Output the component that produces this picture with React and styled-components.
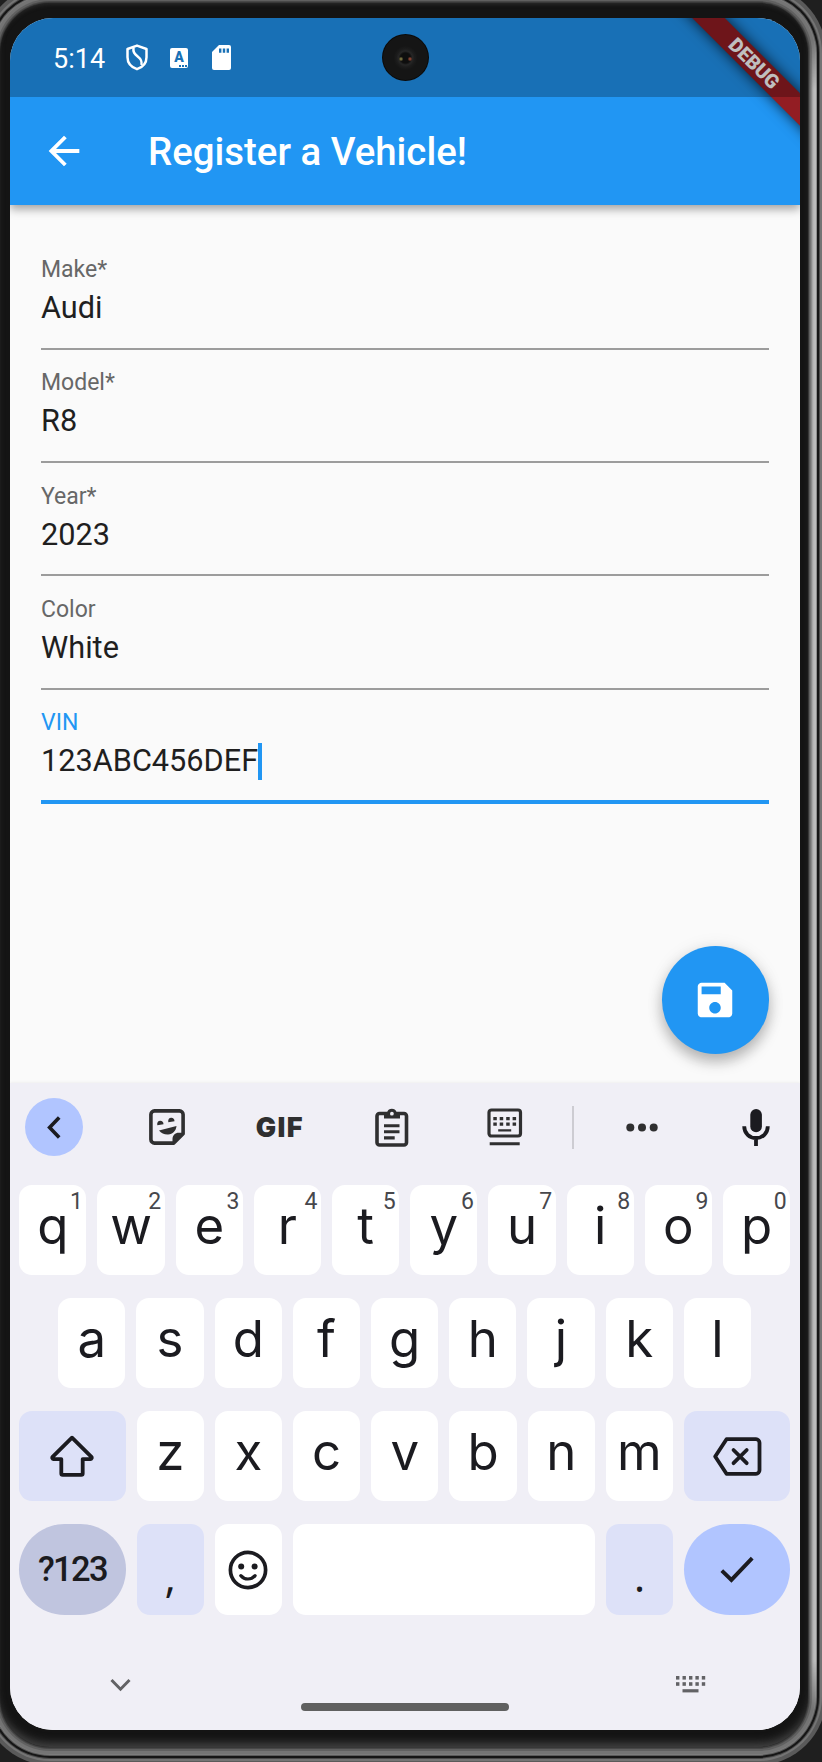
import React from "react";
import styled, { createGlobalStyle, css } from "styled-components";

const GlobalStyle = createGlobalStyle`
  *, *::before, *::after { box-sizing: border-box; }
  body { margin: 0; background: #1f1f1f; font-family: Roboto, sans-serif; }
`;

/* ---------- device ---------- */

const Page = styled.div`
  position: relative;
  width: 822px;
  height: 1762px;
  overflow: hidden;
  background: #1f1f1f;
  display: flex;
  align-items: flex-start;
`;

const Bezel = styled.div`
  flex: none;
  width: 808px;
  height: 1744px;
  margin-top: 3px;
  padding: 15px 8px 17px 10px;
  border-radius: 50px;
  background: #141414;
  box-shadow:
    inset 0 -8px 8px -4px #444,
    inset 0 4px 4px -3px #2e2e2e,
    0 0 0 1px #383838,
    0 0 0 2px #484848,
    0 0 0 4px #606060,
    0 0 0 7px #747474,
    0 0 0 8px #7c7c7c,
    0 0 0 9px #5a5a5a,
    0 0 0 11px #151515,
    0 0 0 12px #4a4a4a,
    0 0 0 14px #747474,
    0 0 0 18px #5a5a5a;
`;

const RimHighlight = styled.div`
  position: absolute;
  left: 809px;
  top: 40px;
  width: 8px;
  height: 1670px;
  background: linear-gradient(90deg, #555, #7c7c7c 25%, #b2b2b2 50%, #c0c0c0 80%, #777);
  mask-image: linear-gradient(transparent, #000 50px, #000 1620px, transparent);
`;

const Screen = styled.div`
  position: relative;
  width: 790px;
  height: 1712px;
  border-radius: 43px;
  overflow: hidden;
  background: #fafafa;
  display: flex;
  flex-direction: column;
`;

/* ---------- header ---------- */

const Header = styled.header`
  position: relative;
  z-index: 1;
  flex: none;
  height: 187px;
  background: #2196f3;
  box-shadow: 0 4px 9px rgba(0, 0, 0, 0.36);
`;

const StatusBar = styled.div`
  position: relative;
  z-index: 2;
  height: 79px;
  padding-left: 43px;
  display: flex;
  align-items: center;
  background: rgba(0, 0, 0, 0.25);
  color: #fff;
`;

const Clock = styled.span`
  width: 73px;
  font-size: 27px;
  line-height: 32px;
  padding-top: 2px;
`;

const StatusIcon = styled.span`
  display: flex;
  width: ${(p) => p.$w}px;
  margin-right: ${(p) => p.$gap}px;
`;

const LetterBadge = styled.span`
  width: 18px;
  height: 20px;
  margin-right: 24px;
  border-radius: 2px;
  background: #fff;
  color: #1971b6;
  font: 900 14px/18px Roboto, sans-serif;
  text-align: center;
  background-image: linear-gradient(#1971b6, #1971b6), linear-gradient(#1971b6, #1971b6), linear-gradient(#1971b6, #1971b6);
  background-size: 2px 2px;
  background-position: 9px 17px, 12px 17px, 15px 17px;
  background-repeat: no-repeat;
`;

const Camera = styled.div`
  position: absolute;
  left: 371.5px;
  top: 16px;
  width: 47px;
  height: 47px;
  border-radius: 50%;
  background:
    radial-gradient(circle at 19px 25px, #8f8a50 0, #5a5530 1.2px, transparent 2.4px),
    radial-gradient(circle at 28px 25px, #a0503c 0, #6a3528 1.2px, transparent 2.4px),
    radial-gradient(circle at 23.5px 24px, #0e0e0e 0 5px, #262626 7px, #1c1c1c 9px, #151515 12px);
  box-shadow: inset 0 0 0 1px #0a0a0a;
`;

const AppBar = styled.div`
  height: 108px;
  padding: 0 31px;
  display: flex;
  align-items: center;
  color: #fff;
`;

const BackButton = styled.span`
  display: flex;
  width: 46px;
  margin-right: 61px;
`;

const Title = styled.h1`
  margin: 0;
  font-size: 38.4px;
  line-height: 45px;
  font-weight: 500;
  white-space: nowrap;
`;

const DebugBanner = styled.div`
  position: absolute;
  z-index: 1;
  left: 634px;
  top: 33.5px;
  width: 220px;
  height: 23px;
  transform: rotate(45deg);
  background: #931d23;
  box-shadow: 0 0 14px rgba(0, 0, 0, 0.75);
  color: #fff;
  font-size: 19.6px;
  font-weight: 900;
  line-height: 23px;
  text-align: center;
`;

/* ---------- form ---------- */

const Body = styled.main`
  flex: none;
  height: 877.6px;
  padding: 31.6px 31px 28.8px;
  display: flex;
  flex-direction: column;
`;

const Field = styled.div`
  height: 113.3px;
  padding-top: 19.6px;
  border-bottom: 2px solid #9c9c9c;
  ${(p) =>
    p.$focused &&
    css`
      height: 113.9px;
      padding-top: 19px;
      border-bottom: 4px solid #2196f3;
    `}
`;

const Label = styled.div`
  font-size: 23px;
  line-height: 27px;
  color: ${(p) => (p.$focused ? "#2196f3" : "#676767")};
`;

const Value = styled.div`
  display: flex;
  align-items: center;
  margin-top: 7px;
  font-size: 30.7px;
  line-height: 36px;
  color: #1f1f1f;
`;

const Caret = styled.span`
  width: 4px;
  height: 37px;
  background: #2196f3;
`;

const Fab = styled.button`
  align-self: flex-end;
  margin-top: auto;
  width: 107.5px;
  height: 107.5px;
  padding: 0;
  border: 0;
  border-radius: 50%;
  background: #2196f3;
  color: #fff;
  display: flex;
  align-items: center;
  justify-content: center;
  box-shadow: 0 8px 14px rgba(0, 0, 0, 0.26), 0 1px 18px rgba(0, 0, 0, 0.08);
`;

/* ---------- keyboard ---------- */

const Keyboard = styled.section`
  flex: 1;
  background: #f0eff6;
  box-shadow: 0 0 3px rgba(0, 0, 0, 0.08);
  position: relative;
  color: #1b1b20;
  display: flex;
  flex-direction: column;
`;

const Toolbar = styled.div`
  flex: none;
  height: 89.4px;
  display: flex;
  align-items: center;
  color: #2f2f30;
`;

const Collapse = styled.span`
  flex: none;
  width: 58px;
  height: 58px;
  margin: 0 28px 0 15px;
  border-radius: 50%;
  background: #b1c5ff;
  color: #1b1b20;
  display: flex;
  align-items: center;
  justify-content: center;
`;

const Tool = styled.span`
  flex: none;
  width: 112.5px;
  display: flex;
  justify-content: center;
`;

const Gif = styled.span`
  font: 900 27px/30px Inter, sans-serif;
  letter-spacing: 1.4px;
  padding-top: 1px;
`;

const Divider = styled.span`
  flex: none;
  width: 2px;
  height: 43px;
  margin: 0 12px 0 11px;
  background: #cdccd2;
`;

const MicTool = styled(Tool)`
  width: 114px;
  color: #1b1b20;
`;

const Rows = styled.div`
  flex: none;
  padding: 13px 9.3px 0;
  display: flex;
  flex-direction: column;
  gap: 23.3px;
`;

const Row = styled.div`
  display: flex;
  gap: 11px;
  padding: 0 ${(p) => p.$inset || 0}px;
`;

const keyFill = { plain: "#ffffff", tint: "#dde1f8", mode: "#c0c5df", action: "#b1c5ff" };

const Key = styled.div`
  position: relative;
  width: ${(p) => p.$w || 67.2}px;
  height: ${(p) => p.$h || 89.8}px;
  border-radius: ${(p) => (p.$round ? 46 : 13)}px;
  background: ${(p) => keyFill[p.$fill || "plain"]};
  display: flex;
  align-items: center;
  justify-content: center;
  flex: none;
`;

const Letter = styled.span`
  font: 400 51px/60px Inter, sans-serif;
  padding-bottom: 8px;
`;

const Hint = styled.span`
  position: absolute;
  top: 4px;
  right: 3.5px;
  font: 400 23px/26px Roboto, sans-serif;
  color: #47474c;
`;

const ModeText = styled.span`
  font: 500 34.5px/40px Roboto, sans-serif;
  letter-spacing: -1.6px;
  padding-bottom: 2px;
`;

const Punct = styled.span`
  font: 500 44px/50px "Open Sans", sans-serif;
  padding-top: 10px;
`;

const NavBar = styled.div`
  flex: 1;
  display: flex;
  align-items: flex-start;
  justify-content: space-between;
  padding: 60.4px 94px 0 100px;
  color: #626265;
`;

const HomePill = styled.span`
  width: 208px;
  height: 8px;
  margin-top: 27.6px;
  margin-left: 3px;
  border-radius: 4px;
  background: #606060;
`;

/* ---------- icons ---------- */

const MaterialIcon = ({ d, size }) => (
  <svg width={size} height={size} viewBox="0 0 24 24" fill="currentColor">
    <path d={d} />
  </svg>
);

const ShieldIcon = () => (
  <svg width="22" height="27" viewBox="0 0 22 27" fill="none" stroke="#fff" strokeWidth="2.5" strokeLinejoin="round">
    <path d="M11 1.6 1.5 5v8.2c0 5.6 4 10 9.500 12 5.500-2 9.500-6.400 9.500-12V5z" />
    <path d="M7.500 3.500c-.6 4.500.8 6.300 4.200 9 3.500 2.800 4.300 4.500 3.800 8.500" />
  </svg>
);

const SdIcon = () => (
  <svg width="19" height="25" viewBox="0 0 19 25">
    <path fill="#fff" d="M7 0h10a2 2 0 0 1 2 2v21a2 2 0 0 1-2 2H2a2 2 0 0 1-2-2V7z" />
    <path fill="#1971b6" d="M7 3.500h2.400v4.200H7zM10.800 3.500h2.400v4.200h-2.400zM14.600 3.500H17v4.200h-2.400z" />
  </svg>
);

const ChevronLeft = () => (
  <svg width="14" height="23" viewBox="0 0 14 23" fill="none" stroke="currentColor" strokeWidth="3.600">
    <path d="M12.200 1.400 2.600 11.500l9.600 10.100" />
  </svg>
);

const StickerIcon = () => (
  <svg width="36" height="36" viewBox="0 0 36 36">
    <path
      fill="none"
      stroke="currentColor"
      strokeWidth="3.600"
      strokeLinejoin="round"
      d="M5.500 1.900h25a3.600 3.600 0 0 1 3.600 3.600v19.300l-9.300 9.300H5.500a3.600 3.600 0 0 1-3.600-3.600v-25a3.600 3.600 0 0 1 3.600-3.600z"
    />
    <path fill="currentColor" d="M23.500 34.500v-4.500c0-3.500 2.700-6.200 6.200-6.200h5zM10 21.500l17.500-4.500c-.5 5-3.800 8.300-8.300 8.500-3.800.2-6.900-1.300-9.200-4zM8.300 16.300c-.5-2.700.7-4.600 3-4.600 2 0 3.200 1.400 3.200 3.500zM19.300 13.300c-.5-2.700.7-4.600 3-4.600 2 0 3.200 1.400 3.200 3.500z" />
  </svg>
);

const ClipboardIcon = () => (
  <svg width="34" height="39" viewBox="0 0 34 39">
    <rect x="2" y="5.500" width="29.500" height="31.500" rx="2.500" fill="none" stroke="currentColor" strokeWidth="3.600" />
    <path fill="currentColor" d="M9 4h3.200a5 5 0 0 1 9.300 0H25v6.500H9zM9 16.200h15.500v3.100H9zM9 22.200h15.500v3.100H9zM9 28.300h10.700v3.100H9z" />
    <circle cx="16.900" cy="5.700" r="1.900" fill="#f0eff6" />
  </svg>
);

const FloatingKeyboardIcon = () => (
  <svg width="36" height="38" viewBox="0 0 36 38">
    <rect x="2" y="2" width="31.500" height="26" rx="2.500" fill="none" stroke="currentColor" strokeWidth="3.200" />
    <path
      fill="currentColor"
      d="M6.300 9h3.500v3.300H6.300zM12.700 9h3.500v3.300h-3.500zM19.200 9h3.500v3.300h-3.500zM25.600 9h3.500v3.300h-3.500zM6.300 14.500h3.500v3.300H6.300zM12.700 14.500h3.500v3.300h-3.500zM19.200 14.500h3.500v3.300h-3.500zM25.600 14.500h3.500v3.300h-3.500zM11.200 21.300h13v2.200h-13zM2.700 34.200h30v3h-30z"
    />
  </svg>
);

const DotsIcon = () => (
  <svg width="32" height="9" viewBox="0 0 32 9" fill="currentColor">
    <circle cx="4.300" cy="4.500" r="4" />
    <circle cx="16" cy="4.500" r="4" />
    <circle cx="27.700" cy="4.500" r="4" />
  </svg>
);

const MicIcon = () => (
  <svg width="28" height="37" viewBox="0 0 28 37">
    <rect x="8.300" y="0" width="11.600" height="23.200" rx="5.800" fill="currentColor" />
    <path d="M2.200 17.300c0 7 5.300 11.700 11.800 11.700s11.800-4.700 11.800-11.700M14 29v8" fill="none" stroke="currentColor" strokeWidth="3.800" />
  </svg>
);

const ShiftIcon = () => (
  <svg width="44" height="42" viewBox="0 0 44 42" fill="none" stroke="currentColor" strokeWidth="3.800" strokeLinejoin="round">
    <path d="M22 2.700 2.600 21.800a1.400 1.400 0 0 0 1 2.300h7.700v14.300a1.400 1.400 0 0 0 1.400 1.400h18.600a1.400 1.400 0 0 0 1.400-1.400V24.100h7.700a1.400 1.400 0 0 0 1-2.300z" />
  </svg>
);

const BackspaceIcon = () => (
  <svg width="49" height="39" viewBox="0 0 49 39" fill="none" stroke="currentColor" strokeWidth="3.800" strokeLinejoin="round">
    <path d="M13.500 2.200H43a3.500 3.500 0 0 1 3.500 3.500v27.600a3.500 3.500 0 0 1-3.500 3.500H13.500L2.200 19.500z" />
    <path d="m20.500 13 13.200 13.200M33.700 13 20.500 26.200" strokeLinecap="round" />
  </svg>
);

const SmileIcon = () => (
  <svg width="40" height="40" viewBox="0 0 40 40">
    <circle cx="20" cy="20" r="17.600" fill="none" stroke="currentColor" strokeWidth="3.700" />
    <circle cx="13.200" cy="16.400" r="3" fill="currentColor" />
    <circle cx="26.600" cy="16.400" r="3" fill="currentColor" />
    <path d="M12.800 25.600c3.800 4.500 10.500 4.500 14.300 0" fill="none" stroke="currentColor" strokeWidth="3.200" strokeLinecap="round" />
  </svg>
);

const CheckIcon = () => (
  <svg width="34" height="27" viewBox="0 0 34 27" fill="none" stroke="currentColor" strokeWidth="3.900">
    <path d="m1.800 14.600 9.600 9.300L32.200 2.200" />
  </svg>
);

const ChevronDown = () => (
  <svg width="21" height="16" viewBox="0 -3 21 16" fill="none" stroke="currentColor" strokeWidth="3">
    <path d="m1.500 1 9 9.200 9-9.200" />
  </svg>
);

const SwitchKeyboardIcon = () => (
  <svg width="30" height="17" viewBox="0 0 30 17" fill="currentColor">
    {[0, 6.5, 13, 19.4, 25.8].map((x) => (
      <React.Fragment key={x}>
        <rect x={x} y="0" width="3.400" height="3.600" />
        <rect x={x} y="6.200" width="3.400" height="3.600" />
      </React.Fragment>
    ))}
    <rect x="6.500" y="13.200" width="16" height="3.200" />
  </svg>
);

const BACK = "M20 11H7.830l5.590-5.590L12 4l-8 8 8 8 1.410-1.410L7.830 13H20v-2z";
const SAVE =
  "M17 3H5c-1.110 0-2 .9-2 2v14c0 1.100.89 2 2 2h14c1.100 0 2-.9 2-2V7l-4-4zm-5 16c-1.660 0-3-1.340-3-3s1.340-3 3-3 3 1.340 3 3-1.340 3-3 3zm3-10H5V5h10v4z";

const fields = [
  ["Make*", "Audi"],
  ["Model*", "R8"],
  ["Year*", "2023"],
  ["Color", "White"],
  ["VIN", "123ABC456DEF"],
];

export default function App() {
  return (
    <Page>
      <GlobalStyle />
      <Bezel>
        <Screen>
          <Header>
            <StatusBar>
              <Clock>5:14</Clock>
              <StatusIcon $w={22} $gap={22}><ShieldIcon /></StatusIcon>
              <LetterBadge>A</LetterBadge>
              <StatusIcon $w={19} $gap={0}><SdIcon /></StatusIcon>
              <Camera />
            </StatusBar>
            <AppBar>
              <BackButton><MaterialIcon d={BACK} size={46} /></BackButton>
              <Title>Register a Vehicle!</Title>
            </AppBar>
            <DebugBanner>DEBUG</DebugBanner>
          </Header>

          <Body>
            {fields.map(([label, value]) => {
              const focused = label === "VIN";
              return (
                <Field key={label} $focused={focused}>
                  <Label $focused={focused}>{label}</Label>
                  <Value>
                    {value}
                    {focused && <Caret />}
                  </Value>
                </Field>
              );
            })}
            <Fab aria-label="Save"><MaterialIcon d={SAVE} size={46} /></Fab>
          </Body>

          <Keyboard>
            <Toolbar>
              <Collapse><ChevronLeft /></Collapse>
              <Tool><StickerIcon /></Tool>
              <Tool><Gif>GIF</Gif></Tool>
              <Tool><ClipboardIcon /></Tool>
              <Tool><FloatingKeyboardIcon /></Tool>
              <Divider />
              <Tool><DotsIcon /></Tool>
              <MicTool><MicIcon /></MicTool>
            </Toolbar>
            <Rows>
              <Row>
                {[..."qwertyuiop"].map((c, i) => (
                  <Key key={c}>
                    <Letter>{c}</Letter>
                    <Hint>{(i + 1) % 10}</Hint>
                  </Key>
                ))}
              </Row>
              <Row $inset={39}>
                {[..."asdfghjkl"].map((c) => (
                  <Key key={c}><Letter>{c}</Letter></Key>
                ))}
              </Row>
              <Row>
                <Key $w={106.4} $fill="tint"><ShiftIcon /></Key>
                {[..."zxcvbnm"].map((c) => (
                  <Key key={c}><Letter>{c}</Letter></Key>
                ))}
                <Key $w={106.4} $fill="tint"><BackspaceIcon /></Key>
              </Row>
              <Row>
                <Key $w={106.4} $h={91} $fill="mode" $round><ModeText>?123</ModeText></Key>
                <Key $h={91} $fill="tint"><Punct>,</Punct></Key>
                <Key $h={91}><SmileIcon /></Key>
                <Key $w={301.8} $h={91} />
                <Key $h={91} $fill="tint"><Punct>.</Punct></Key>
                <Key $w={106.4} $h={91} $fill="action" $round><CheckIcon /></Key>
              </Row>
            </Rows>
            <NavBar>
              <ChevronDown />
              <HomePill />
              <SwitchKeyboardIcon />
            </NavBar>
          </Keyboard>
        </Screen>
      </Bezel>
      <RimHighlight />
    </Page>
  );
}
